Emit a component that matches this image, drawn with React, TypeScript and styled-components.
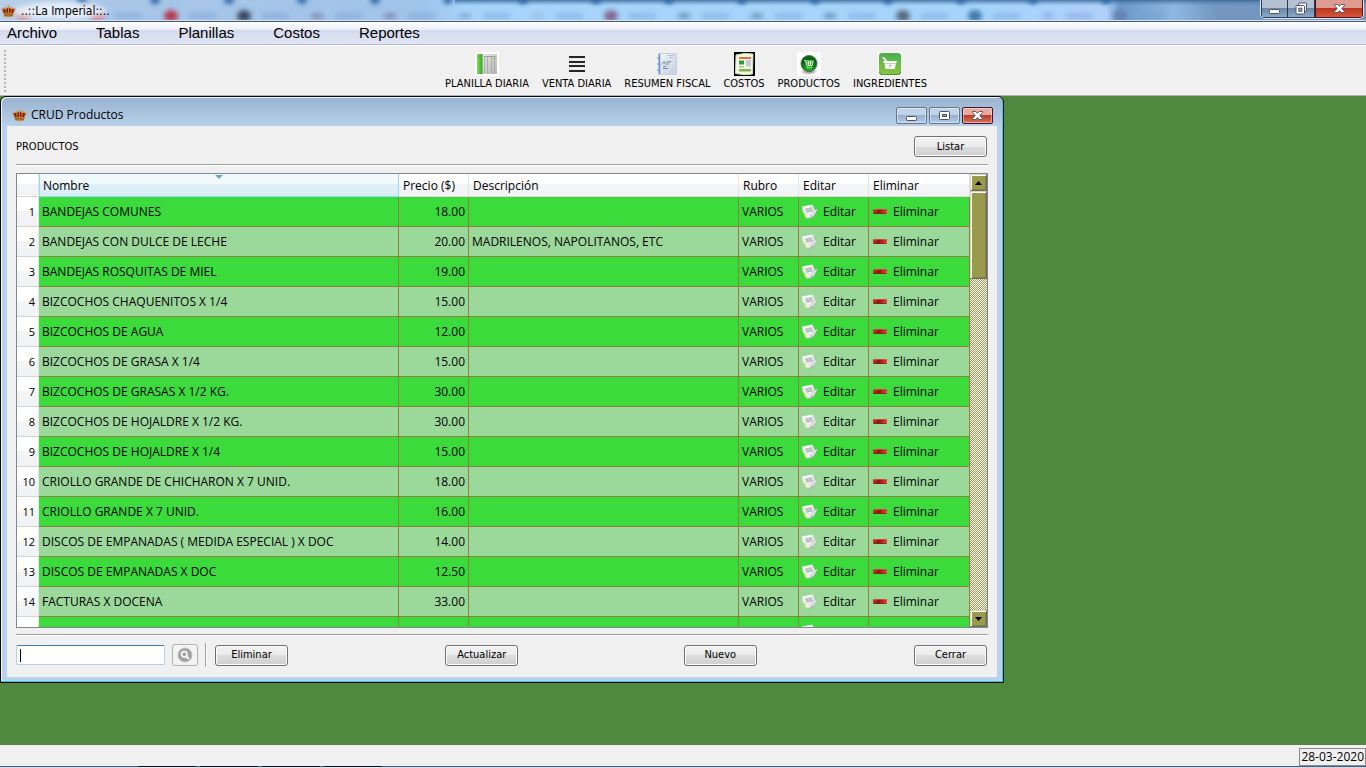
import React, { useState } from "react";
import styled, { createGlobalStyle, css } from "styled-components";

const segoe = '"Open Sans", "Noto Sans", sans-serif';
const tahoma = '"DejaVu Sans Condensed", "DejaVu Sans", sans-serif';

const GlobalStyle = createGlobalStyle`
  * { box-sizing: border-box; }
  body { margin: 0; background: #f0f0f0; color: #000; font: 12px/16px ${segoe}; }
  button, input { font: inherit; color: inherit; margin: 0; padding: 0; }
  svg { display: block; flex: none; }
`;

const Page = styled.div`
  display: flex;
  flex-direction: column;
  min-height: 100vh;
`;

const TitleBar = styled.header`
  position: relative;
  display: flex;
  align-items: flex-start;
  height: 22px;
  overflow: hidden;
  border-bottom: 1px solid #4c5870;
`;

const Backdrop = styled.svg`
  position: absolute;
  inset: 0;
  width: 100%;
  height: 100%;
`;

const AppTitle = styled.h1`
  position: relative;
  display: flex;
  flex: 1;
  align-items: center;
  gap: 5px;
  height: 22px;
  margin: 0;
  padding-left: 1px;
  font: 12px/16px ${tahoma};
`;

const MainControls = styled.div`
  position: relative;
  display: flex;
  height: 19px;
  margin-right: 2px;
  border: 1px solid #dbe6f2;
  border-top: 0;
  border-radius: 0 0 5px 5px;
  overflow: hidden;
`;

const MainControl = styled.button<{ $close?: boolean }>`
  display: flex;
  align-items: center;
  justify-content: center;
  width: ${(p) => (p.$close ? 48 : 27)}px;
  border: 1px solid #2a3a52;
  border-top: 0;
  border-left-width: ${(p) => (p.$close ? 1 : 0)}px;
  background: linear-gradient(#b3c1d3 0 45%, #6d87a8 50%, #8ca9c8 100%);
  &:first-child { border-left-width: 1px; }
  ${(p) =>
    p.$close &&
    css`
      border-color: #4a1418;
      background: linear-gradient(#dc9c90 0 45%, #bd3621 50%, #d5583a 100%);
    `}
`;

const MenuBar = styled.nav`
  display: flex;
  gap: 39px;
  height: 23px;
  padding-left: 7px;
  border-bottom: 1px solid #b2b9d6;
  background: linear-gradient(#fff 0, #eaeef7 8px, #d5dbee 8px, #e0e5f4 100%);
  font: 15px/22px "Liberation Sans", Arial, sans-serif;
  a { color: #000; text-decoration: none; }
`;

const ToolBar = styled.div`
  display: flex;
  align-items: center;
  height: 51px;
  padding-left: 4px;
  border-top: 1px solid #fff;
  border-bottom: 1px solid #b4b4b4;
`;

const Grip = styled.div`
  width: 2px;
  height: 42px;
  background: repeating-linear-gradient(#b4b4b4 0 2px, transparent 2px 4px);
`;

const Tools = styled.div`
  display: flex;
  flex: 1;
  justify-content: center;
  gap: 13px;
`;

const Tool = styled.button`
  display: flex;
  flex-direction: column;
  align-items: center;
  gap: 1px;
  padding-top: 2px;
  border: 0;
  background: none;
  font: 11px/14px ${tahoma};
  white-space: nowrap;
`;

const Desktop = styled.main`
  flex: 1;
  background: #4f883e;
`;

const SubWindow = styled.section`
  display: flex;
  flex-direction: column;
  width: 1004px;
  max-width: 100%;
  padding: 0 5px 5px;
  border: 1px solid #0a0a0a;
  border-radius: 6px 6px 0 0;
  background: linear-gradient(#98b3d0 0, #b9d1ea 30px);
  box-shadow: inset -1px -1px #3cc8e4, inset 1px 1px #eef4fb;
`;

const SubTitle = styled.div`
  display: flex;
  align-items: center;
  gap: 2px;
  height: 29px;
  padding: 7px 5px 0 6px;
`;

const SubTitleText = styled.h2`
  flex: 1;
  margin: 0;
  padding-left: 2px;
  font-size: 12px;
  font-weight: 400;
`;

const SubControl = styled.button<{ $close?: boolean }>`
  display: flex;
  align-items: center;
  justify-content: center;
  width: 31px;
  height: 17px;
  border: 1px solid #64748c;
  border-radius: 2px;
  box-shadow: inset 0 0 0 1px rgba(255, 255, 255, 0.45);
  background: linear-gradient(#c0d3e8 0 45%, #96b1ce 50%, #b3cde8 100%);
  ${(p) =>
    p.$close &&
    css`
      border-color: #4a1226;
      background: linear-gradient(#e8a99f 0 45%, #bb3c28 50%, #d2735a 100%);
    `}
`;

const Panel = styled.div`
  padding: 10px 9px 9px;
  margin: 0 1px;
  background: #f0f0f0;
`;

const PanelHead = styled.div`
  display: flex;
  align-items: flex-start;
  justify-content: space-between;
  height: 28px;
  padding-right: 1px;
  font: 11px/22px ${tahoma};
`;

const Rule = styled.hr`
  height: 2px;
  margin: 0;
  border: 0;
  border-top: 1px solid #a0a0a0;
  background: #fff;
`;

const PushButton = styled.button`
  width: 73px;
  height: 21px;
  border: 1px solid #707070;
  border-radius: 3px;
  box-shadow: inset 0 0 0 1px #fcfcfc;
  background: linear-gradient(#f2f2f2 0, #ebebeb 50%, #dddddd 50%, #cfcfcf 100%);
  font: 11px/16px ${tahoma};
`;

const GridFrame = styled.div`
  display: flex;
  height: 455px;
  margin: 7px 0 6px;
  border: 1px solid #828790;
  background: #fff;
`;

const GridView = styled.div`
  flex: 1;
  min-width: 0;
  overflow: hidden;
`;

const Table = styled.table`
  width: 100%;
  table-layout: fixed;
  border-collapse: separate;
  border-spacing: 0;
`;

const HeadCell = styled.th<{ $sorted?: boolean }>`
  position: relative;
  height: 23px;
  padding: 1px 4px 0;
  border-right: 1px solid #e3e5e8;
  border-bottom: 1px solid #d5d5d5;
  box-shadow: inset 0 -1px #fff;
  background: linear-gradient(#fff 0 45%, #f4f5f7 45%, #f1f2f4 100%);
  font-weight: 400;
  text-align: left;
  ${(p) =>
    p.$sorted &&
    css`
      border-color: #96d9f9;
      background: linear-gradient(#f2f9fc 0 45%, #e1f1f9 45%, #d8ecf6 100%);
      box-shadow: inset 1px 0 #96d9f9;
    `}
`;

const SortMark = styled.svg`
  position: absolute;
  top: 1px;
  left: 50%;
  margin-left: -4px;
`;

const RowHead = styled.th`
  height: 30px;
  padding: 0 3px 0 0;
  border-right: 1px solid #e3e5e8;
  border-bottom: 1px solid #d5d5d5;
  background: linear-gradient(#fff 0 45%, #f4f5f7 50%, #f1f2f4 100%);
  font: 11px/14px ${segoe};
  text-align: right;
`;

const Row = styled.tr`
  background: #9bd99b;
  &:nth-child(odd) { background: #3adb3a; }
`;

const Cell = styled.td<{ $right?: boolean }>`
  height: 30px;
  padding: 0 3px;
  border-right: 1px solid #92803f;
  border-bottom: 1px solid #92803f;
  text-align: ${(p) => (p.$right ? "right" : "left")};
  white-space: nowrap;
`;

const RowAction = styled.button`
  display: flex;
  align-items: center;
  gap: 5px;
  border: 0;
  background: none;
`;

const ScrollBar = styled.div`
  display: flex;
  flex-direction: column;
  width: 17px;
  background: linear-gradient(45deg, #9c9c4c 30%, #fff 30% 70%, #9c9c4c 70%) 0 0 / 2px 2px;
`;

const raised = css`
  border: 1px solid;
  border-color: #d6d6a8 #6c6c6c #6c6c6c #d6d6a8;
  box-shadow: inset 1px 1px #fff, inset -1px -1px #85853f;
  background: #9a9a4c;
`;

const ScrollButton = styled.button`
  display: flex;
  align-items: center;
  justify-content: center;
  height: 17px;
  ${raised}
`;

const ScrollThumb = styled.div`
  height: 88px;
  margin-bottom: auto;
  ${raised}
`;

const Footer = styled.form`
  display: flex;
  align-items: center;
  height: 26px;
  margin-top: 6px;
  padding-right: 1px;
`;

const SearchBox = styled.input`
  width: 149px;
  height: 20px;
  padding: 0 4px;
  border: 1px solid #b5cfe7;
  border-top-color: #3d7bad;
  border-radius: 2px;
  outline: 0;
  background: linear-gradient(#000, #000) 3px 3px / 1px 13px no-repeat #fff;
  &:not(:placeholder-shown) { background: #fff; }
`;

const SearchButton = styled.button`
  display: flex;
  align-items: center;
  justify-content: center;
  width: 26px;
  height: 22px;
  margin: 0 7px;
  border: 1px solid #adb2b5;
  border-radius: 3px;
  background: #f4f4f4;
`;

const Divider = styled.div`
  width: 2px;
  height: 24px;
  margin-right: 8px;
  border-left: 1px solid #a0a0a0;
  background: #fff;
`;

const Spacer = styled.div<{ $grow: number }>`
  flex: ${(p) => p.$grow} 1 0;
`;

const StatusBar = styled.footer`
  display: flex;
  justify-content: flex-end;
  height: 21px;
  padding-top: 3px;
`;

const DateBox = styled.time`
  padding: 0 1px;
  border: 1px solid #8a8a8a;
  line-height: 16px;
`;

const TaskEdge = styled.div`
  display: flex;
  gap: 4px;
  height: 2px;
  padding-left: 138px;
  border-top: 1px solid #4e5f75;
  background: #cbdcec;
`;

const TaskSlot = styled.span`
  width: 58px;
  height: 2px;
  margin-top: -1px;
  border-top: 1px solid #0c1118;
  background: #e8eef4;
`;

const Crown = () => (
  <svg width="15" height="15" viewBox="0 0 15 15" aria-hidden="true">
    <path d="M1 5.2Q3 4 5 5.5L7.5 3 10 5.5Q12 4 14 5.2L12.3 10H2.7Z" fill="#8a1a14" />
    <path d="M1 5 3.2 10M14 5 11.8 10M7.5 2.5V10M4.5 5 5.4 10M10.5 5 9.6 10" stroke="#c9852f" fill="none" />
    <path d="M2.6 9.8Q7.5 8 12.4 9.8L12 12.5Q7.5 14 3 12.5Z" fill="#c7903c" />
    <path d="M3.4 11.3Q7.5 10 11.6 11.3" stroke="#7d3a16" fill="none" />
    <circle cx="7.5" cy="2" r="1.3" fill="#d8a648" />
    <circle cx="1.3" cy="5" r="1.1" fill="#cf9a4a" />
    <circle cx="13.7" cy="5" r="1.1" fill="#cf9a4a" />
    <circle cx="4.5" cy="4.2" r="1" fill="#b9702c" />
    <circle cx="10.5" cy="4.2" r="1" fill="#b9702c" />
  </svg>
);

const MinIcon = () => (
  <svg width="13" height="13" viewBox="0 0 13 13" aria-hidden="true">
    <rect x="1.5" y="7.5" width="10" height="4" rx="1" fill="#fff" stroke="#4c5566" />
  </svg>
);

const MaxIcon = () => (
  <svg width="13" height="11" viewBox="0 0 13 11" aria-hidden="true">
    <rect x="1.5" y="1.5" width="10" height="8" rx="1" fill="#fff" stroke="#4c5566" />
    <rect x="4.5" y="4.5" width="4" height="2" fill="#8fa9c6" stroke="#4c5566" />
  </svg>
);

const RestoreIcon = () => (
  <svg width="13" height="13" viewBox="0 0 13 13" aria-hidden="true">
    <rect x="3.5" y="1" width="8" height="8" rx="1" fill="#fff" stroke="#4c5566" />
    <rect x="1" y="3.5" width="8.5" height="8.5" rx="1" fill="#fff" stroke="#4c5566" />
    <rect x="3.8" y="6.2" width="3" height="3" fill="#8fa9c6" stroke="#4c5566" />
  </svg>
);

const CloseIcon = () => (
  <svg width="13" height="11" viewBox="0 0 13 11" aria-hidden="true">
    <path d="M1.5 1.5H4.7L6.5 3.3 8.3 1.5H11.5V2.6L8.8 5.5 11.5 8.4V9.5H8.3L6.5 7.7 4.7 9.5H1.5V8.4L4.2 5.5 1.5 2.6Z" fill="#fff" stroke="#55566a" />
  </svg>
);

const DailySheetIcon = () => (
  <svg width="24" height="24" viewBox="0 0 24 24" aria-hidden="true">
    <defs>
      <linearGradient id="sheetGreen" x1="0" x2="1"><stop stopColor="#84e05c" /><stop offset="1" stopColor="#2fa51f" /></linearGradient>
      <linearGradient id="sheetGray" x2="1" y2="1"><stop stopColor="#e9e9e9" /><stop offset="1" stopColor="#b4b4b4" /></linearGradient>
    </defs>
    <path fill="#fff" d="M0 0H24V24H0Z" />
    <path fill="url(#sheetGray)" d="M7 2H22V22H7Z" />
    <path fill="url(#sheetGreen)" d="M2 2H7.5V22H2Z" />
    <path d="M3 3.500 4.500 5.500 6.500 3.500" stroke="#4aa838" fill="none" />
    <path d="M9 4.500H21" stroke="#a2a2a2" />
    <path d="M9.500 5V21M12.500 5V21M16.500 5V21M19.500 5V21" stroke="#a4a4a4" strokeWidth=".8" />
    <path d="M17 6.500H21" stroke="#8ad66e" />
  </svg>
);

const LinesIcon = () => (
  <svg width="24" height="24" viewBox="0 0 24 24" aria-hidden="true">
    <path d="M4 5H20M4 10H20M4 14H20M4 19H20" stroke="#262626" strokeWidth="2" />
  </svg>
);

const NotebookIcon = () => (
  <svg width="24" height="24" viewBox="0 0 24 24" aria-hidden="true">
    <defs><linearGradient id="note" x2="1" y2="1"><stop stopColor="#f5f8fc" /><stop offset="1" stopColor="#c3cddd" /></linearGradient></defs>
    <path d="M3.5 1.5H21.5V22.5H3.5Z" fill="url(#note)" stroke="#c4cede" />
    <path d="M4.5 2V22" stroke="#5d94dc" strokeWidth="1.5" />
    <path d="M2 6H5M2 12H5M2 18H5" stroke="#7d91ae" />
    <path d="M12 3.5H19M14 5.5H18" stroke="#b7c3d8" />
    <path d="M7 12.500 9 9.500 10.500 12.500M11 10H15M11 12H14M8 14.500H11M8 16.500H13M14 9.500H16" stroke="#7c8a9f" fill="none" />
  </svg>
);

const CostsIcon = () => (
  <svg width="24" height="24" viewBox="0 0 24 24" aria-hidden="true">
    <path fill="#000" d="M2 0H23V24H2Z" />
    <path d="M4 3Q12 .5 21 2L20.5 22Q12 23.500 3.500 21.500Z" fill="#f4fae2" stroke="#cfe6b4" />
    <path fill="#e66c40" d="M7 5H19V7H7Z" />
    <path fill="#2e9a3d" d="M7 8.500H12V12.500H7Z" />
    <path fill="#cbc6de" d="M14 8H19V14.500H14Z" />
    <path fill="#a8c888" d="M7 14H12V15.500H7Z" />
    <path fill="#85ad60" d="M7 17H19V19.500H7Z" />
  </svg>
);

const ProductsIcon = () => (
  <svg width="24" height="24" viewBox="0 0 24 24" aria-hidden="true">
    <defs>
      <radialGradient id="ball" cy=".75"><stop stopColor="#38c238" /><stop offset="1" stopColor="#046408" /></radialGradient>
      <radialGradient id="ballShade"><stop stopColor="#777" /><stop offset="1" stopColor="#777" stopOpacity="0" /></radialGradient>
    </defs>
    <path fill="#fff" d="M0 0H24V24H0Z" />
    <ellipse cx="12" cy="19.5" rx="9" ry="3.500" fill="url(#ballShade)" />
    <circle cx="12" cy="11.500" r="8" fill="url(#ball)" stroke="#4a7a4a" />
    <path d="M7 8.500H8.500L9.800 13.500H15L16.300 9H8.800M9.300 11H15.500M11.500 9V13M13.500 9V13" stroke="#cdebc8" fill="none" />
    <path d="M10 15.500H11.500M13.500 15.500H15" stroke="#e8f8e6" strokeWidth="1.200" />
  </svg>
);

const IngredientsIcon = () => (
  <svg width="24" height="24" viewBox="0 0 24 24" aria-hidden="true">
    <defs><linearGradient id="basket" x2="0" y2="1"><stop stopColor="#48b04c" /><stop offset="1" stopColor="#8cc63e" /></linearGradient></defs>
    <path fill="#fff" d="M0 0H24V24H0Z" />
    <rect x="1" y="1" width="22" height="22" rx="3" fill="url(#basket)" />
    <path d="M1.5 20Q1.5 22.5 4 22.5H20Q22.5 22.5 22.5 20" stroke="#4b9a2c" fill="none" />
    <path d="M4.500 6H6L8.500 9.500" stroke="#fff" strokeWidth="1.600" fill="none" />
    <path d="M5 9H19L18 11.500H6.200ZM6.500 12H17.800L16.800 17H7.700Z" fill="#fff" />
    <path d="M11 13.300H13.500M12.300 14.500 11.200 15.500" stroke="#5cb545" />
  </svg>
);

const EditIcon = () => (
  <svg width="16" height="16" viewBox="0 0 16 16" aria-hidden="true">
    <defs><linearGradient id="paper" x2="1" y2="1"><stop stopColor="#fff" /><stop offset=".6" stopColor="#eceeee" /><stop offset="1" stopColor="#c4c8c8" /></linearGradient></defs>
    <path d="M1.500 8 3 13.500 8 13Z" fill="#e3de78" />
    <path d="M0 2.500 10.500.5 13.500 8 11.500 13 5 15 3.500 9.500 1 8.500Z" fill="url(#paper)" />
    <path d="M3 5.200 10 3.700 11 6.600 4.200 8.200Z" fill="#c3c8ca" />
    <path d="M3.300 5 10 3.600M4.300 8.200 11 6.800" stroke="#9ea4a8" strokeWidth=".7" />
    <path d="M15.500 5.500 12 11.500 9.500 13.200 10 10.500 14 5Z" fill="#f4f4f6" stroke="#9b9ca3" strokeWidth=".6" />
    <path d="M5 15 11.500 13" stroke="#a5aaac" strokeWidth=".8" />
  </svg>
);

const RemoveIcon = () => (
  <svg width="16" height="16" viewBox="0 0 16 16" aria-hidden="true">
    <defs><linearGradient id="minus" x2="1" y2=".2"><stop stopColor="#d83a34" /><stop offset=".5" stopColor="#951010" /><stop offset="1" stopColor="#dd4038" /></linearGradient></defs>
    <rect x="1" y="5" width="14" height="5" rx="1" fill="url(#minus)" />
    <path d="M2 9.500H14" stroke="#7e2013" strokeWidth=".8" />
    <path d="M2 5.500H14" stroke="#e06a55" strokeWidth=".6" />
  </svg>
);

const SearchIcon = () => (
  <svg width="16" height="16" viewBox="0 0 16 16" aria-hidden="true">
    <circle cx="8" cy="8" r="7" fill="#a2a2a2" stroke="#bdbdbd" />
    <circle cx="7.3" cy="7.3" r="2.7" fill="#a2a2a2" stroke="#fff" strokeWidth="1.500" />
    <path d="M9.300 9.300 12 12" stroke="#fff" strokeWidth="1.800" />
  </svg>
);

const Arrow = ({ down = false }: { down?: boolean }) => (
  <svg width="7" height="4" viewBox="0 0 7 4" aria-hidden="true">
    <path d={down ? "M0 0H7L3.5 4Z" : "M0 4H7L3.5 0Z"} fill="#000" />
  </svg>
);

const tabSpots: [number, string][] = [
  [24, "#d88f98"], [97, "#d2808e"], [171, "#b53a4c"], [244, "#3b4a5c"], [317, "#76769c"], [390, "#75759c"],
  [465, "#7d98c4"], [538, "#9bb2dc"], [611, "#84688f"], [684, "#56809f"], [757, "#5780a8"], [830, "#567fa8"],
  [903, "#566a7c"], [975, "#3f78a8"], [1048, "#88a8de"], [1120, "#6583b0"],
];

const faintSpots = [317, 390, 465, 538, 684, 757, 830, 1048];

const GlassBackdrop = () => (
  <Backdrop viewBox="0 0 1366 21" preserveAspectRatio="none" aria-hidden="true">
    <defs>
      <linearGradient id="glass">
        <stop stopColor="#b9cfe9" /><stop offset=".08" stopColor="#a9c6e8" /><stop offset=".31" stopColor="#a0c4ea" />
        <stop offset=".34" stopColor="#a6d4fa" /><stop offset=".74" stopColor="#a6d4fa" /><stop offset=".81" stopColor="#b0d0fa" />
        <stop offset=".82" stopColor="#6b98c8" /><stop offset=".86" stopColor="#8db8e2" /><stop offset=".89" stopColor="#7397c0" />
        <stop offset="1" stopColor="#7595bd" />
      </linearGradient>
      <linearGradient id="shade" x2="0" y2="1"><stop stopColor="#305c88" stopOpacity=".75" /><stop offset=".28" stopColor="#4f84b8" stopOpacity="0" /></linearGradient>
      <filter id="soft" x="-100%" y="-100%" width="300%" height="300%"><feGaussianBlur stdDeviation="2.500" /></filter>
    </defs>
    <rect width="1366" height="21" fill="url(#glass)" />
    <rect x="455" width="911" height="21" fill="url(#shade)" />
    {tabSpots.map(([x, fill]) => (
      <g key={x} filter="url(#soft)">
        <ellipse cx={x} cy="16" rx="7" ry={faintSpots.includes(x) ? 3 : 6} fill={fill} opacity={faintSpots.includes(x) ? 0.7 : 1} />
        <rect x={x + 18} y="13" width="27" height="6" fill="#6f97cc" opacity=".4" />
        {x < 1100 && <ellipse cx={x + 58} cy="0" rx="5" ry="4" fill="#2f68a8" />}
      </g>
    ))}
    <ellipse cx="60" cy="11" rx="46" ry="9" fill="#eaf2fb" opacity=".9" filter="url(#soft)" />
    <path d="M449 0V21" stroke="#5c7fa8" strokeWidth="5" filter="url(#soft)" />
    <path d="M0 20.500H1366" stroke="#cfe2f5" />
  </Backdrop>
);

const menus = ["Archivo", "Tablas", "Planillas", "Costos", "Reportes"];

const tools: [string, React.FC][] = [
  ["PLANILLA DIARIA", DailySheetIcon],
  ["VENTA DIARIA", LinesIcon],
  ["RESUMEN FISCAL", NotebookIcon],
  ["COSTOS", CostsIcon],
  ["PRODUCTOS", ProductsIcon],
  ["INGREDIENTES", IngredientsIcon],
];

const products: [string, string, string?][] = [
  ["BANDEJAS COMUNES", "18.00"],
  ["BANDEJAS CON DULCE DE LECHE", "20.00", "MADRILENOS, NAPOLITANOS, ETC"],
  ["BANDEJAS ROSQUITAS DE MIEL", "19.00"],
  ["BIZCOCHOS CHAQUENITOS X 1/4", "15.00"],
  ["BIZCOCHOS DE AGUA", "12.00"],
  ["BIZCOCHOS DE GRASA X 1/4", "15.00"],
  ["BIZCOCHOS DE GRASAS X 1/2 KG.", "30.00"],
  ["BIZCOCHOS DE HOJALDRE X 1/2 KG.", "30.00"],
  ["BIZCOCHOS DE HOJALDRE X 1/4", "15.00"],
  ["CRIOLLO GRANDE DE CHICHARON X 7 UNID.", "18.00"],
  ["CRIOLLO GRANDE X 7 UNID.", "16.00"],
  ["DISCOS DE EMPANADAS ( MEDIDA ESPECIAL ) X DOC", "14.00"],
  ["DISCOS DE EMPANADAS X DOC", "12.50"],
  ["FACTURAS X DOCENA", "33.00"],
];

export default function App() {
  const [query, setQuery] = useState("");
  return (
    <Page>
      <GlobalStyle />
      <TitleBar>
        <GlassBackdrop />
        <AppTitle><Crown />..::La Imperial::..</AppTitle>
        <MainControls>
          <MainControl aria-label="Minimizar"><MinIcon /></MainControl>
          <MainControl aria-label="Restaurar"><RestoreIcon /></MainControl>
          <MainControl $close aria-label="Salir"><CloseIcon /></MainControl>
        </MainControls>
      </TitleBar>
      <MenuBar>
        {menus.map((m) => <a key={m} href={`#${m.toLowerCase()}`}>{m}</a>)}
      </MenuBar>
      <ToolBar>
        <Grip />
        <Tools>
          {tools.map(([label, Icon]) => <Tool key={label}><Icon />{label}</Tool>)}
        </Tools>
      </ToolBar>
      <Desktop>
        <SubWindow>
          <SubTitle>
            <Crown />
            <SubTitleText>CRUD Productos</SubTitleText>
            <SubControl aria-label="Minimizar ventana"><MinIcon /></SubControl>
            <SubControl aria-label="Maximizar ventana"><MaxIcon /></SubControl>
            <SubControl $close aria-label="Cerrar ventana"><CloseIcon /></SubControl>
          </SubTitle>
          <Panel>
            <PanelHead>PRODUCTOS<PushButton>Listar</PushButton></PanelHead>
            <Rule />
            <GridFrame>
              <GridView>
                <Table>
                  <colgroup>
                    <col width="22" /><col /><col width="70" /><col width="270" />
                    <col width="60" /><col width="70" /><col width="101" />
                  </colgroup>
                  <thead>
                    <tr>
                      <HeadCell as="td" />
                      <HeadCell $sorted>
                        Nombre
                        <SortMark width="8" height="4" viewBox="0 0 8 4"><path d="M0 0H8L4 4Z" fill="#6fa3c0" /></SortMark>
                      </HeadCell>
                      <HeadCell>Precio ($)</HeadCell>
                      <HeadCell>Descripción</HeadCell>
                      <HeadCell>Rubro</HeadCell>
                      <HeadCell>Editar</HeadCell>
                      <HeadCell>Eliminar</HeadCell>
                    </tr>
                  </thead>
                  <tbody>
                    {products.map(([name, price, description], i) => (
                      <Row key={name}>
                        <RowHead>{i + 1}</RowHead>
                        <Cell>{name}</Cell>
                        <Cell $right>{price}</Cell>
                        <Cell>{description}</Cell>
                        <Cell>VARIOS</Cell>
                        <Cell><RowAction><EditIcon />Editar</RowAction></Cell>
                        <Cell><RowAction><RemoveIcon />Eliminar</RowAction></Cell>
                      </Row>
                    ))}
                    <Row>
                      <RowHead />
                      <Cell /><Cell /><Cell /><Cell />
                      <Cell><EditIcon /></Cell>
                      <Cell />
                    </Row>
                  </tbody>
                </Table>
              </GridView>
              <ScrollBar>
                <ScrollButton aria-label="Subir"><Arrow /></ScrollButton>
                <ScrollThumb />
                <ScrollButton aria-label="Bajar"><Arrow down /></ScrollButton>
              </ScrollBar>
            </GridFrame>
            <Rule />
            <Footer onSubmit={(e) => e.preventDefault()}>
              <SearchBox aria-label="Buscar producto" placeholder=" " value={query} onChange={(e) => setQuery(e.target.value)} />
              <SearchButton aria-label="Buscar"><SearchIcon /></SearchButton>
              <Divider />
              <PushButton type="button">Eliminar</PushButton>
              <Spacer $grow={19} />
              <PushButton type="button">Actualizar</PushButton>
              <Spacer $grow={20} />
              <PushButton type="button">Nuevo</PushButton>
              <Spacer $grow={19} />
              <PushButton type="button">Cerrar</PushButton>
            </Footer>
          </Panel>
        </SubWindow>
      </Desktop>
      <StatusBar><DateBox dateTime="2020-03-28">28-03-2020</DateBox></StatusBar>
      <TaskEdge><TaskSlot /><TaskSlot /><TaskSlot /><TaskSlot /></TaskEdge>
    </Page>
  );
}
